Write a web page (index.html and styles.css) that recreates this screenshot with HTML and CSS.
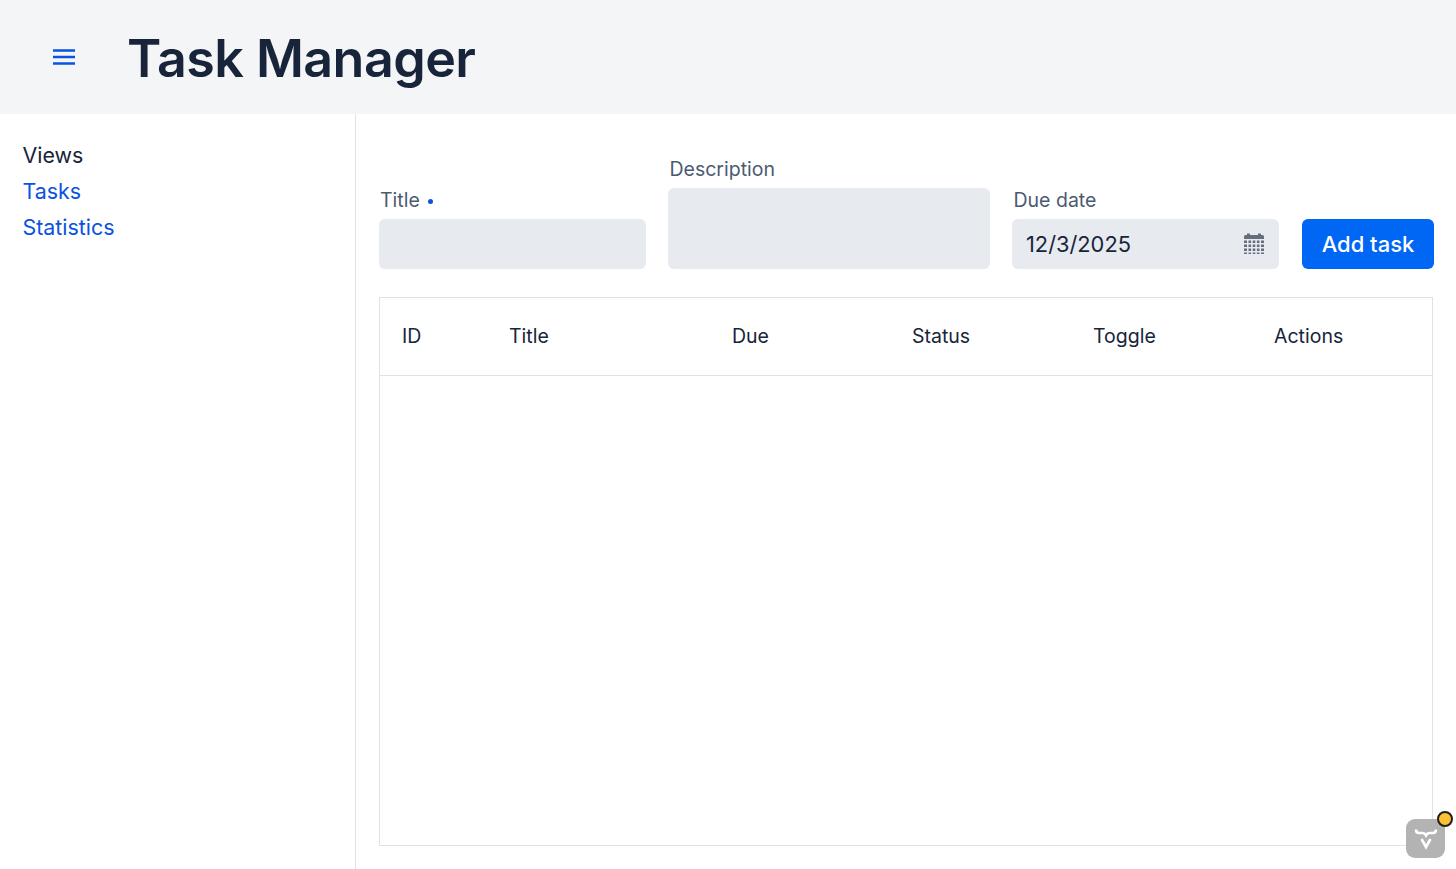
FILE: index.html
```html
<!DOCTYPE html>
<html lang="en">
<head>
  <meta charset="UTF-8">
  <meta name="viewport" content="width=device-width, initial-scale=1.0">
  <title>Task Manager</title>
  <link rel="stylesheet" href="styles.css">
</head>
<body>
  <header class="navbar">
    <button class="menu-toggle" aria-label="Toggle menu">
      <svg width="24" height="18" viewBox="0 0 24 18"><path d="M1 2.500h22M1 9h22M1 15.500h22" stroke="#0a52e0" stroke-width="2.600" fill="none"/></svg>
    </button>
    <h1>Task Manager</h1>
  </header>

  <div class="layout">
    <nav class="sidebar">
      <div class="nav-title">Views</div>
      <a href="#">Tasks</a>
      <a href="#">Statistics</a>
    </nav>

    <main class="content">
      <form class="task-form">
        <div class="form-group title-field">
          <label>Title <span class="required"></span></label>
          <div class="input"></div>
        </div>
        <div class="form-group desc-field">
          <label>Description</label>
          <div class="input textarea"></div>
        </div>
        <div class="form-group date-field">
          <label>Due date</label>
          <div class="input date-input">
            <span>12/3/2025</span>
            <svg class="calendar-icon" width="22" height="24" viewBox="0 0 22 24" fill="#666e7d">
              <path d="M1 5.500q0-1.500 1.500-1.500H4V2.500h3V4h8V2.500h3V4h1.500Q21 4 21 5.500V8H1z"/>
              <path d="M1 9.500h3v2.600H1zM5.500 9.500h2.600v2.600H5.500zM9.700 9.500h2.600v2.600H9.700zM13.900 9.500h2.600v2.600h-2.600zM18 9.500h3v2.600h-3zM1 13.500h3v2.600H1zM5.500 13.500h2.600v2.600H5.500zM9.700 13.500h2.600v2.600H9.700zM13.900 13.500h2.600v2.600h-2.600zM18 13.500h3v2.600h-3zM1 17.500h3v2.600H1zM5.500 17.500h2.600v2.600H5.500zM9.700 17.500h2.600v2.600H9.700zM13.900 17.500h2.600v2.600h-2.600zM18 17.500h3v2.600h-3z"/>
              <path d="M1 21.500h3V23H1zM5.500 21.500h2.600V23H5.500zM9.700 21.500h2.600V23H9.700zM13.900 21.500h2.600V23h-2.600zM18 21.500h3V23h-3z"/>
            </svg>
          </div>
        </div>
        <button type="button" class="add-button">Add task</button>
      </form>

      <div class="grid">
        <div class="grid-header">
          <div class="col-id">ID</div>
          <div class="col-title">Title</div>
          <div class="col-due">Due</div>
          <div class="col-status">Status</div>
          <div class="col-toggle">Toggle</div>
          <div class="col-actions">Actions</div>
        </div>
      </div>
    </main>
  </div>

  <div class="dev-badge">
    <svg width="24" height="22" viewBox="0 0 24 22" fill="none" stroke="#fff" stroke-width="2.600">
      <path d="M2 1.500c0 2.800 1 3.500 3 3.500h3.500c1.700 0 2.500.6 3.500 2.500 1-1.900 1.800-2.500 3.500-2.500H19c2 0 3-.7 3-3.500"/>
      <path d="M7.500 11l4.500 8 4.500-8"/>
    </svg>
    <span class="dev-dot"></span>
  </div>
</body>
</html>
```

FILE: styles.css
```css
* {
  box-sizing: border-box;
}
body {
  margin: 0;
  height: 869px;
  overflow: hidden;
  font-family: Inter, "Noto Sans", sans-serif;
  color: #18243a;
  background: #fff;
}
.navbar {
  display: flex;
  align-items: center;
  height: 114px;
  padding: 3px 0 0 52px;
  background-color: #f3f5f7;
}
.menu-toggle {
  display: flex;
  width: 24px;
  padding: 0;
  margin: -3px 51px 0 0;
  background: none;
  border: none;
}
.navbar h1 {
  margin: 0;
  font-size: 52px;
  font-weight: 600;
  letter-spacing: -0.55px;
  color: #18243a;
}
.layout {
  display: flex;
  height: 755px;
}
.sidebar {
  display: flex;
  flex-direction: column;
  flex: 0 0 356px;
  padding: 23px 22.500px;
  border-right: 1px solid #dfe3e8;
  font-size: 21.400px;
  line-height: 36px;
}
.sidebar a {
  color: #0a52e0;
  text-decoration: none;
}
.content {
  flex: 1;
  padding: 0 22px 23px 23px;
  display: flex;
  flex-direction: column;
}
.task-form {
  display: flex;
  align-items: flex-end;
  gap: 22px;
  margin-top: 43px;
}
.form-group label {
  display: block;
  margin: 0 0 7px 1.500px;
  font-size: 19.500px;
  line-height: 24px;
  color: #4c5a70;
}
.title-field label {
  margin-left: 1px;
}
.required {
  display: inline-block;
  width: 5px;
  height: 5px;
  margin-left: 3px;
  vertical-align: 3px;
  border-radius: 50%;
  background: #0a52e0;
}
.input {
  height: 50px;
  border-radius: 6px;
  background-color: #e7eaef;
}
.textarea {
  height: 81px;
}
.title-field,
.date-field {
  width: 267px;
}
.desc-field {
  width: 322px;
}
.date-input {
  display: flex;
  align-items: center;
  justify-content: space-between;
  padding: 0 14px;
  font-size: 21.800px;
}
.calendar-icon {
  margin-top: -2px;
}
.add-button {
  width: 132px;
  height: 50px;
  margin-left: 1px;
  border: none;
  border-radius: 6px;
  background-color: #0067f5;
  color: #fff;
  font-family: inherit;
  font-size: 22px;
  font-weight: 500;
}
.grid {
  flex: 1;
  margin: 28px 1px 0 0;
  border: 1px solid #dfe3e8;
}
.grid-header {
  display: flex;
  align-items: center;
  height: 78px;
  padding-bottom: 2px;
  border-bottom: 1px solid #dfe3e8;
  font-size: 19.500px;
  font-weight: 400;
}
.grid-header div {
  padding-left: 22px;
}
.col-id {
  width: 107px;
}
.col-title {
  width: 223px;
}
.col-due {
  width: 180px;
}
.col-status,
.col-toggle {
  width: 181px;
}
.dev-badge {
  position: absolute;
  left: 1406px;
  top: 819px;
  display: flex;
  align-items: center;
  justify-content: center;
  width: 39px;
  height: 39px;
  border-radius: 9px;
  background: #b3b3b3;
}
.dev-dot {
  position: absolute;
  top: -8px;
  right: -8px;
  width: 16px;
  height: 16px;
  border: 2.500px solid #1f1f1f;
  border-radius: 50%;
  background: #fcc231;
}
```
